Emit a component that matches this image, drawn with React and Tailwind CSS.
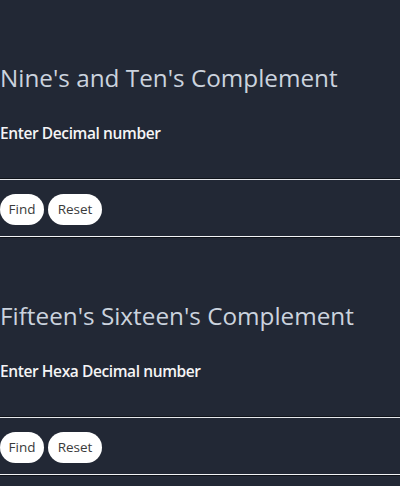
import React, { useState } from 'react';

function ComplementSection({ title, label }) {
  const [value, setValue] = useState('');

  return (
    <section className="pt-[62px]">
      <h1 className="text-[24.3px] leading-8 text-[#cbd3de] font-normal">{title}</h1>
      <p className="mt-[27px] text-[15.5px] leading-6 font-semibold text-[#f5f5f5] tracking-[-0.4px]">{label}</p>
      {/* input renders only as its groove line */}
      <input
        value={value}
        onChange={(e) => setValue(e.target.value)}
        className="mt-[33px] block w-full h-0 border-t border-t-[#0f131a] border-b border-b-[#e5e7eb] bg-transparent outline-none"
      />
      <div className="mt-[14px] flex gap-1">
        <button className="h-[31px] w-[44px] rounded-full bg-white text-[13.5px] text-[#3a3a3a]">Find</button>
        <button onClick={() => setValue('')} className="h-[31px] w-[54px] rounded-full bg-white text-[13.5px] text-[#3a3a3a]">
          Reset
        </button>
      </div>
      <div className="mt-[11px] border-t border-t-[#f3f4f6] border-b border-b-[#0f131a]"></div>
    </section>
  );
}

export default function App() {
  return (
    <div className="min-h-screen bg-[#222835] font-['Open_Sans',sans-serif]">
      <ComplementSection title="Nine's and Ten's Complement" label="Enter Decimal number" />
      <ComplementSection title="Fifteen's Sixteen's Complement" label="Enter Hexa Decimal number" />
    </div>
  );
}
